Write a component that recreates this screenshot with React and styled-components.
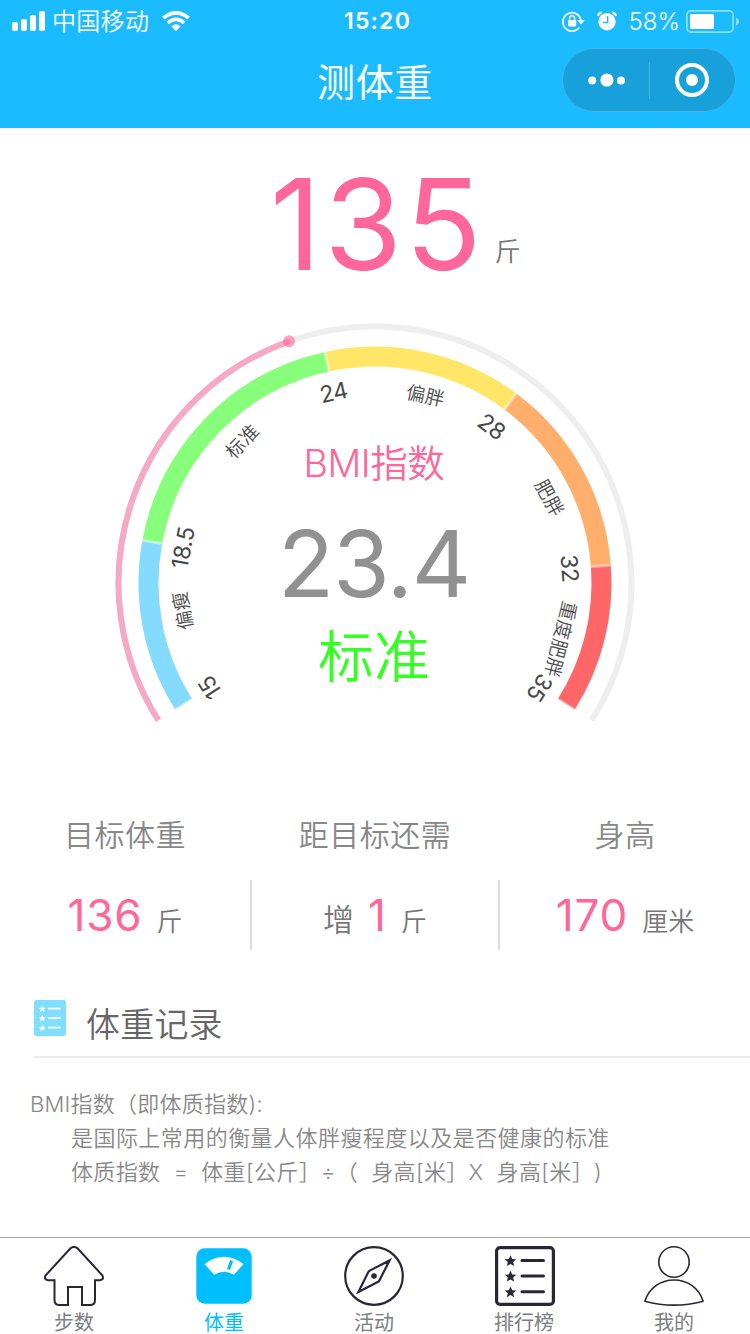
import React from 'react';
import styled, { createGlobalStyle } from 'styled-components';

const PINK = '#ff6699';
const LATIN_CJK = 'Inter, "Noto Sans CJK SC", sans-serif';

const GlobalStyle = createGlobalStyle`
  * { box-sizing: border-box; }
  body { margin: 0; background: #fff; font-family: ${LATIN_CJK}; }
`;

const Screen = styled.div`
  width: 750px;
  height: 1334px;
  display: flex;
  flex-direction: column;
  overflow: hidden;
  background: #fff;
`;

const Header = styled.header`
  height: 128px;
  flex: none;
  background: #1abcff;
  color: #fff;
`;

const StatusBar = styled.div`
  height: 40px;
  display: grid;
  grid-template-columns: 1fr auto 1fr;
  align-items: center;
  padding: 0 11px 0 12px;
`;

const StatusGroup = styled.div`
  display: flex;
  align-items: center;
  justify-content: ${(p) => (p.$end ? 'flex-end' : 'flex-start')};
`;

const Carrier = styled.span`
  margin: 0 13px 0 7px;
  padding-top: 2px;
  font-size: 24px;
  font-weight: 350;
  line-height: 40px;
  letter-spacing: 0.3px;
`;

const Clock = styled.span`
  padding: 0 0 0 4px;
  font-size: 23px;
  font-weight: 600;
  letter-spacing: 1.2px;
  line-height: 41px;
`;

const Percent = styled.span`
  margin: 0 6px 0 12px;
  font-size: 24px;
  font-weight: 350;
  line-height: 41px;
`;

const StatusIcons = styled.span`
  display: flex;
  align-items: center;
  gap: 12px;
`;

const TitleBar = styled.div`
  height: 88px;
  display: grid;
  grid-template-columns: 1fr auto 1fr;
  align-items: start;
  padding: 0 14px;
`;

const Title = styled.h1`
  grid-column: 2;
  margin: 0;
  font-size: 38px;
  font-weight: 400;
  line-height: 84px;
  letter-spacing: 0.6px;
`;

const Capsule = styled.div`
  justify-self: end;
  width: 174px;
  height: 64px;
  margin-top: 8px;
  display: grid;
  grid-template-columns: 86px 1px 1fr;
  align-items: center;
  justify-items: center;
  padding-right: 1px;
  border: 1px solid #45b4e4;
  border-radius: 32px;
  background: #17a0da;
`;

const CapsuleRule = styled.i`
  width: 1px;
  height: 37px;
  background: #45b4e0;
`;

const Weight = styled.section`
  height: 186px;
  flex: none;
  display: flex;
  align-items: flex-start;
  padding-left: 270px;
`;

const WeightValue = styled.strong`
  color: ${PINK};
  font-size: 126px;
  font-weight: 400;
  line-height: 192px;
  letter-spacing: 3px;
`;

const WeightUnit = styled.span`
  margin: 104px 0 0 10px;
  color: #777;
  font-size: 26px;
  font-weight: 350;
  line-height: 40px;
`;

const Gauge = styled.section`
  height: 466px;
  flex: none;
  display: grid;
  justify-items: center;

  > * { grid-area: 1 / 1; }
`;

const GaugeReadout = styled.div`
  display: flex;
  flex-direction: column;
  align-items: center;
  padding: 120px 2px 0 0;
`;

const ReadoutLine = styled.span`
  color: ${(p) => p.$color};
  font-size: ${(p) => p.$size}px;
  font-weight: ${(p) => p.$weight};
  line-height: ${(p) => p.$height}px;
  letter-spacing: ${(p) => p.$spacing || 0}px;
`;

const Stats = styled.section`
  height: 194px;
  flex: none;
  display: grid;
  grid-template-columns: 250px 250px 250px;
  padding-top: 32px;
`;

const Stat = styled.div`
  display: grid;
  grid-template-rows: 46px 70px;
  row-gap: 22px;
  text-align: center;
`;

const StatLabel = styled.span`
  color: #888;
  font-size: 30px;
  font-weight: 350;
  line-height: 46px;
  letter-spacing: 0.5px;
`;

const StatBody = styled.div`
  display: flex;
  justify-content: center;
  align-items: baseline;
  gap: 14px;
  border: solid #dcdcdc;
  border-width: ${(p) => (p.$divided ? '0 2px' : '0')};
  line-height: 70px;
`;

const StatPrefix = styled.span`
  color: #777;
  font-size: 31px;
  font-weight: 350;
`;

const StatValue = styled.span`
  color: ${PINK};
  font-size: 44px;
  font-weight: 400;
  letter-spacing: 0.9px;
`;

const StatUnit = styled.span`
  color: #777;
  font-size: 26px;
  font-weight: 350;
`;

const RecordHeader = styled.section`
  height: 84px;
  flex: none;
  margin-left: 34px;
  display: flex;
  align-items: flex-start;
  gap: 20px;
  padding-top: 26px;
  border-bottom: 2px solid #ececec;
`;

const RecordTitle = styled.h2`
  margin: 0;
  color: #666;
  font-size: 34px;
  font-weight: 350;
  line-height: 50px;
  letter-spacing: 0.2px;
`;

const Notes = styled.section`
  flex: 1;
  padding: 29px 0 0 30px;
  color: #888;
  font-size: 22px;
  font-weight: 350;
  line-height: 34px;
  white-space: pre;
  text-spacing-trim: space-all;
`;

const Note = styled.p`
  margin: 0;
  padding-left: ${(p) => (p.$indent ? 41 : 0)}px;
  letter-spacing: ${(p) => p.$spacing || 0}px;
`;

const TabBar = styled.nav`
  height: 97px;
  flex: none;
  display: grid;
  grid-template-columns: repeat(5, 150px);
  border-top: 1px solid #adadad;
`;

const Tab = styled.a`
  display: flex;
  flex-direction: column;
  align-items: center;
  padding: 8px 2px 0 0;
  color: ${(p) => (p.$active ? '#00bfff' : '#7a7e83')};
  font-size: 20px;
  line-height: 34px;
  font-weight: 400;
`;

const CX = 260;
const CY = 269;
const START = 147.6;
const SWEEP = 244.8;
const MIN = 15;
const MAX = 35;

const angleOf = (v) => START + ((v - MIN) / (MAX - MIN)) * SWEEP;
const polar = (deg, r) => {
  const a = (deg * Math.PI) / 180;
  return [CX + r * Math.cos(a), CY + r * Math.sin(a)];
};
const arc = (from, to, r) => {
  const [x1, y1] = polar(angleOf(from), r);
  const [x2, y2] = polar(angleOf(to), r);
  const large = angleOf(to) - angleOf(from) > 180 ? 1 : 0;
  return `M${x1} ${y1}A${r} ${r} 0 ${large} 1 ${x2} ${y2}`;
};

const bands = [
  { from: 15, to: 18.5, color: '#84daff', label: '偏瘦' },
  { from: 18.5, to: 24, color: '#87ff7b', label: '标准' },
  { from: 24, to: 28, color: '#ffe666', label: '偏胖' },
  { from: 28, to: 32, color: '#ffae6b', label: '肥胖' },
  { from: 32, to: 35, color: '#ff6668', label: '重度肥胖' },
];
const ticks = [15, 18.5, 24, 28, 32, 35];

function Dial({ value }) {
  const [kx, ky] = polar(angleOf(value), 256.5);
  return (
    <svg width="520" height="420" viewBox="0 0 520 420" fill="none">
      <path d={arc(MIN, MAX, 256.5)} stroke="#eeeeee" strokeWidth="6" />
      <path d={arc(MIN, value, 256.5)} stroke="#f7a8c4" strokeWidth="6" />
      <circle cx={kx} cy={ky} r="6" fill={PINK} fillOpacity="0.6" />
      {bands.map((b) => (
        <path key={b.from} d={arc(b.from, b.to, 226.5)} stroke={b.color} strokeWidth="20" />
      ))}
      {ticks.map((t) => {
        const [x1, y1] = polar(angleOf(t), 216.5);
        const [x2, y2] = polar(angleOf(t), 236.5);
        return <path key={t} d={`M${x1} ${y1}L${x2} ${y2}`} stroke="#fff" strokeOpacity="0.4" strokeWidth="3" />;
      })}
      {ticks.map((t) => (
        <text
          key={t}
          transform={`translate(${CX} ${CY}) rotate(${angleOf(t) + 90})`}
          y="-187"
          textAnchor="middle"
          fontSize="23"
          fontWeight="400"
          letterSpacing="-0.4"
          fill="#484848"
        >
          {t}
        </text>
      ))}
      {bands.map((b) => (
        <text
          key={b.label}
          transform={`translate(${CX} ${CY}) rotate(${angleOf((b.from + b.to) / 2) + 90})`}
          x="9.5"
          y="-187"
          textAnchor="middle"
          fontSize="19"
          letterSpacing="0.4"
          fontWeight="350"
          fill="#4c4c4c"
        >
          {b.label}
        </text>
      ))}
    </svg>
  );
}

const STAR = 'M0 -5.8L1.7 -2L5.7 -1.7L2.7 1L3.6 5L0 2.9L-3.6 5L-2.7 1L-5.7 -1.7L-1.7 -2Z';

const SignalIcon = () => (
  <svg width="33" height="20" viewBox="0 0 33 20" fill="#fff">
    <rect x="0" y="11" width="6" height="9" rx="2" />
    <rect x="9" y="8" width="6" height="12" rx="2" />
    <rect x="18" y="4" width="6" height="16" rx="2" />
    <rect x="27" y="0" width="6" height="20" rx="2" />
  </svg>
);

const WifiIcon = () => (
  <svg width="28" height="20" viewBox="0 0 28 20" fill="none" stroke="#fff" strokeWidth="3.6">
    <path d="M1.3 7.2Q14 -3.6 26.7 7.2" />
    <path d="M5.8 11.8Q14 4.8 22.2 11.8" />
    <path d="M9.3 15.4Q14 11.2 18.7 15.4L14 20Z" fill="#fff" stroke="none" />
  </svg>
);

const LockRotationIcon = () => (
  <svg width="23" height="21" viewBox="0 0 23 21" fill="none" stroke="#fff">
    <path d="M17.2 16.4A9.1 9.1 0 1 1 19 9.6" strokeWidth="1.7" />
    <path d="M15.4 9.2H22.8L19.1 13.6Z" fill="#fff" stroke="none" />
    <rect x="6" y="9" width="8.2" height="6.4" rx="0.8" fill="#fff" stroke="none" />
    <path d="M7.6 9.4V7.2A2.5 2.5 0 0 1 12.6 7.2V9.4" strokeWidth="1.4" />
  </svg>
);

const AlarmIcon = () => (
  <svg width="20" height="20" viewBox="0 0 20 20" fill="none">
    <circle cx="10" cy="10.7" r="8.7" fill="#fff" />
    <path d="M0.9 5Q1.4 2 4.6 1.4M19.1 5Q18.6 2 15.4 1.4" stroke="#fff" strokeWidth="2" />
    <path d="M10.6 5V11.4H6" stroke="#1abcff" strokeWidth="1.5" />
  </svg>
);

const BatteryIcon = () => (
  <svg width="53" height="23" viewBox="0 0 53 23" fill="none">
    <rect x="0.9" y="0.9" width="46.2" height="21.2" rx="4" stroke="#8adeff" strokeWidth="1.7" />
    <rect x="4" y="4" width="24" height="15" rx="1" fill="#fff" />
    <path d="M50 7.5Q53 8.5 53 11.5T50 15.5Z" fill="#8adeff" />
  </svg>
);

const MoreIcon = () => (
  <svg width="38" height="14" viewBox="0 0 38 14" fill="#fff">
    <circle cx="5.2" cy="7.5" r="4" />
    <circle cx="19.9" cy="7" r="6.6" />
    <circle cx="34" cy="7.5" r="4" />
  </svg>
);

const TargetIcon = () => (
  <svg width="34" height="34" viewBox="0 0 34 34" fill="none">
    <circle cx="17" cy="17" r="15" stroke="#fff" strokeWidth="4" />
    <circle cx="17" cy="17" r="6" fill="#fff" />
  </svg>
);

const ListBadgeIcon = () => (
  <svg width="32" height="36" viewBox="0 0 32 36" fill="none">
    <rect width="32" height="36" rx="2.5" fill="#80deff" />
    {[9, 18.5, 28].map((y) => (
      <g key={y}>
        <path d={STAR} transform={`translate(8.3 ${y}) scale(0.6)`} fill="#fff" />
        <path d={`M14 ${y - 0.4}H26.5`} stroke="#fff" strokeWidth="1.8" />
      </g>
    ))}
  </svg>
);

const TabIcon = ({ children }) => (
  <svg width="60" height="60" viewBox="0 0 60 60" fill="none" stroke="#292638" strokeWidth="2">
    {children}
  </svg>
);

const HomeIcon = () => (
  <TabIcon>
    <path d="M26.5 2.3Q30 -0.4 33.5 2.3L58.3 29.3Q60.5 33.8 55.8 34.2H51V54Q51 59 46 59H38V41H24V59H15.5Q10.5 59 10.5 54V34.2H4.2Q-0.5 33.8 1.7 29.3Z" />
  </TabIcon>
);

const ScaleIcon = () => (
  <TabIcon>
    <rect x="2.3" y="2.3" width="55.4" height="55.4" rx="8.5" fill="#00bfff" stroke="none" />
    <path d="M10.5 18Q30 3.4 49.5 18L40 28.8Q30 22.5 20.2 28.8Z" fill="#fff" stroke="none" />
    <path d="M37.6 14.5L34.5 23.5" stroke="#00bfff" strokeWidth="3.2" />
  </TabIcon>
);

const CompassIcon = () => (
  <TabIcon>
    <circle cx="30" cy="30" r="28.8" strokeWidth="2.2" />
    <path d="M45.6 14.4L35.4 34.4Q34.8 35.5 33.7 36.1L14.4 46L24.2 26.2Q24.8 25.2 25.8 24.6Z" strokeWidth="2.2" />
    <circle cx="30" cy="30" r="2.8" fill="#292638" stroke="none" />
  </TabIcon>
);

const RankIcon = () => (
  <svg width="60" height="60" viewBox="-1 0 60 60" fill="none" stroke="#292638" overflow="visible">
    <rect x="1.6" y="1.6" width="56.8" height="56.8" rx="3.5" strokeWidth="3.2" />
    {[15, 30.5, 46.2].map((y) => (
      <g key={y}>
        <path d={STAR} transform={`translate(15.5 ${y})`} fill="#292638" stroke="none" />
        <path d={`M27 ${y - 0.4}H48.5`} strokeWidth="3" strokeLinecap="round" />
      </g>
    ))}
  </svg>
);

const PersonIcon = () => (
  <TabIcon>
    <circle cx="30" cy="16" r="15.2" strokeWidth="1.6" />
    <path d="M0.9 55.2C5 42 16.5 34 30 34S55 42 59.1 55.2Q30 63 0.9 55.2Z" strokeWidth="1.6" strokeLinejoin="round" />
  </TabIcon>
);

const tabs = [
  { label: '步数', Icon: HomeIcon },
  { label: '体重', Icon: ScaleIcon, active: true },
  { label: '活动', Icon: CompassIcon },
  { label: '排行榜', Icon: RankIcon },
  { label: '我的', Icon: PersonIcon },
];

const stats = [
  { label: '目标体重', value: '136', unit: '斤' },
  { label: '距目标还需', prefix: '增', value: '1', unit: '斤' },
  { label: '身高', value: '170', unit: '厘米' },
];

export default function App() {
  return (
    <Screen>
      <GlobalStyle />
      <Header>
        <StatusBar>
          <StatusGroup>
            <SignalIcon />
            <Carrier>中国移动</Carrier>
            <WifiIcon />
          </StatusGroup>
          <Clock>15:20</Clock>
          <StatusGroup $end>
            <StatusIcons>
              <LockRotationIcon />
              <AlarmIcon />
            </StatusIcons>
            <Percent>58%</Percent>
            <BatteryIcon />
          </StatusGroup>
        </StatusBar>
        <TitleBar>
          <Title>测体重</Title>
          <Capsule>
            <MoreIcon />
            <CapsuleRule />
            <TargetIcon />
          </Capsule>
        </TitleBar>
      </Header>

      <Weight>
        <WeightValue>135</WeightValue>
        <WeightUnit>斤</WeightUnit>
      </Weight>

      <Gauge>
        <Dial value={23.4} />
        <GaugeReadout>
          <ReadoutLine $color={PINK} $size={37.5} $weight={350} $height={60} $spacing={-0.4}>BMI指数</ReadoutLine>
          <ReadoutLine $color="#919191" $size={92} $weight={400} $height={140} $spacing={-1.2}>23.4</ReadoutLine>
          <ReadoutLine $color="#33ff22" $size={56} $weight={350} $height={46}>标准</ReadoutLine>
        </GaugeReadout>
      </Gauge>

      <Stats>
        {stats.map((s, i) => (
          <Stat key={s.label}>
            <StatLabel>{s.label}</StatLabel>
            <StatBody $divided={i === 1}>
              {s.prefix && <StatPrefix>{s.prefix}</StatPrefix>}
              <StatValue>{s.value}</StatValue>
              <StatUnit>{s.unit}</StatUnit>
            </StatBody>
          </Stat>
        ))}
      </Stats>

      <RecordHeader>
        <ListBadgeIcon />
        <RecordTitle>体重记录</RecordTitle>
      </RecordHeader>

      <Notes>
        <Note $spacing={0.25}>BMI指数（即体质指数):</Note>
        <Note $indent $spacing={0.45}>是国际上常用的衡量人体胖瘦程度以及是否健康的标准</Note>
        <Note $indent $spacing={0.35}>体质指数  =  体重[公斤］÷（  身高[米］X  身高[米］)</Note>
      </Notes>

      <TabBar>
        {tabs.map(({ label, Icon, active }) => (
          <Tab key={label} $active={active}>
            <Icon />
            {label}
          </Tab>
        ))}
      </TabBar>
    </Screen>
  );
}
